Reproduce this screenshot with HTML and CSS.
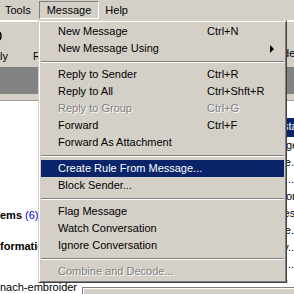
FILE: index.html
```html
<!DOCTYPE html>
<html>
<head>
<meta charset="utf-8">
<link rel="stylesheet" href="styles.css">
</head>
<body>
<div class="app">
  <div class="menubar">
    <span class="mb-item">Tools</span>
    <span class="mb-item pressed">Message</span>
    <span class="mb-item help">Help</span>
  </div>
  <div class="toolbar">
    <div class="tb-btn first">
      <svg class="tb-icon" width="20" height="12" viewBox="0 0 20 12"><path d="M14 1 C18 1 19 4 19 6 C19 8 18 11 14 11" fill="none" stroke="#000" stroke-width="1.5"/></svg>
      <span class="tb-label">Reply</span>
    </div>
    <div class="tb-btn second">
      <span class="tb-label">Reply All</span>
    </div>
    <div class="tb-btn last">
      <span class="tb-label">Sender</span>
    </div>
  </div>
  <div class="band"></div>
  <div class="subband"></div>
  <div class="main">
    <div class="left">
      <div class="line bold">ems <span class="count">(6)</span></div>
      <div class="line bold gap">formation</div>
    </div>
    <div class="right">
      <div class="row sel">Re: order status...</div>
      <div class="row">Price change.</div>
      <div class="row">Fabric type.</div>
      <div class="row">Shipping....</div>
      <div class="row">Thread colors.</div>
      <div class="row">Re: samples...</div>
      <div class="row">Invoice.</div>
      <div class="row">Delivery..</div>
      <div class="row">Design...</div>
      <div class="row">Question..</div>
    </div>
  </div>
  <div class="bottom">
    <div class="addr">nach-embroidery</div>
    <div class="panel"></div>
  </div>
</div>

<div class="menu">
  <div class="mi"><span class="lbl">New Message</span><span class="sc">Ctrl+N</span><span></span></div>
  <div class="mi"><span class="lbl">New Message Using</span><span class="sc"></span><span class="arrow"></span></div>
  <div class="sep"></div>
  <div class="mi"><span class="lbl">Reply to Sender</span><span class="sc">Ctrl+R</span><span></span></div>
  <div class="mi"><span class="lbl">Reply to All</span><span class="sc">Ctrl+Shft+R</span><span></span></div>
  <div class="mi disabled"><span class="lbl">Reply to Group</span><span class="sc">Ctrl+G</span><span></span></div>
  <div class="mi"><span class="lbl">Forward</span><span class="sc">Ctrl+F</span><span></span></div>
  <div class="mi"><span class="lbl">Forward As Attachment</span><span class="sc"></span><span></span></div>
  <div class="sep"></div>
  <div class="mi active"><span class="lbl">Create Rule From Message...</span><span class="sc"></span><span></span></div>
  <div class="mi"><span class="lbl">Block Sender...</span><span class="sc"></span><span></span></div>
  <div class="sep"></div>
  <div class="mi"><span class="lbl">Flag Message</span><span class="sc"></span><span></span></div>
  <div class="mi"><span class="lbl">Watch Conversation</span><span class="sc"></span><span></span></div>
  <div class="mi"><span class="lbl">Ignore Conversation</span><span class="sc"></span><span></span></div>
  <div class="sep"></div>
  <div class="mi disabled"><span class="lbl">Combine and Decode...</span><span class="sc"></span><span></span></div>
</div>
</body>
</html>
```

FILE: styles.css
```css
html, body {
  margin: 0;
  padding: 0;
}
body {
  width: 294px;
  height: 294px;
  overflow: hidden;
  position: relative;
  background: #fff;
  font-family: "Liberation Sans", Arial, sans-serif;
  font-size: 11px;
  color: #000;
}
.app {
  width: 294px;
  height: 294px;
  display: flex;
  flex-direction: column;
  overflow: hidden;
}
.menubar {
  height: 20px;
  flex: none;
  background: #d4d0c8;
  display: flex;
  align-items: center;
  margin-left: -3px;
}
.mb-item {
  height: 16px;
  line-height: 16px;
  padding: 0 7px;
  border: 1px solid transparent;
  white-space: nowrap;
}
.mb-item.pressed {
  border-color: #808080 #fff #fff #808080;
}
.mb-item.help {
  padding-left: 5px;
}
.toolbar {
  height: 47px;
  flex: none;
  background: #d4d0c8;
  box-shadow: inset 0 1px #fff, inset 0 -1px #808080;
  margin-top: 1px;
  display: flex;
  align-items: flex-end;
  padding-bottom: 6px;
  box-sizing: border-box;
}
.tb-btn {
  display: flex;
  flex-direction: column;
  white-space: nowrap;
}
.tb-btn.first {
  margin-left: -19px;
  width: 27px;
  align-items: flex-end;
}
.tb-btn.first .tb-icon {
  margin-bottom: 8px;
  margin-right: 6px;
}
.tb-btn.second {
  margin-left: 25px;
  align-items: flex-start;
}
.tb-btn.last {
  margin-left: auto;
  margin-right: -5px;
  margin-bottom: 3px;
}
.tb-label {
  line-height: 12px;
}
.band {
  height: 26px;
  flex: none;
  background: #828282;
}
.subband {
  height: 6px;
  flex: none;
  background: #d4d0c8;
  border-bottom: 1px solid #a0a0a0;
}
.main {
  flex: 1;
  display: grid;
  grid-template-columns: 1fr 60px;
  min-height: 0;
}
.left {
  padding-top: 107px;
  white-space: nowrap;
  overflow: hidden;
}
.line {
  height: 14px;
  line-height: 14px;
}
.bold {
  font-weight: bold;
}
.count {
  color: #0000cc;
  font-weight: normal;
}
.gap {
  margin-top: 17px;
}
.right {
  padding-top: 17px;
  overflow: hidden;
}
.row {
  height: 17px;
  line-height: 17px;
  white-space: nowrap;
  overflow: hidden;
  text-align: right;
}
.row.sel {
  background: #0a246a;
  color: #fff;
  height: 19px;
}
.bottom {
  height: 12px;
  flex: none;
  display: flex;
}
.addr {
  width: 77px;
  white-space: nowrap;
  overflow: hidden;
  line-height: 12px;
  margin-top: -1px;
}
.panel {
  flex: 1;
  margin-left: 5px;
  margin-top: 5px;
  background: #d4d0c8;
  border-top: 1px solid #808080;
  border-left: 1px solid #808080;
  box-shadow: inset 1px 1px #fff;
}

/* Popup menu (overlay) */
.menu {
  position: absolute;
  left: 38px;
  top: 20px;
  width: 249px;
  box-sizing: border-box;
  background: #d4d0c8;
  border: 1px solid;
  border-color: #d4d0c8 #404040 #404040 #d4d0c8;
  box-shadow: inset 1px 1px #fff, inset -1px -1px #808080;
  padding: 2px;
}
.mi {
  height: 17px;
  line-height: 17px;
  display: grid;
  grid-template-columns: 149px 1fr 14px;
  padding-left: 17px;
  white-space: nowrap;
  align-items: center;
}
.mi.active {
  background: #0a246a;
  color: #fff;
}
.mi.disabled {
  color: #808080;
  text-shadow: 1px 1px 0 #fff;
}
.arrow {
  width: 0;
  height: 0;
  border-left: 4px solid #000;
  border-top: 4px solid transparent;
  border-bottom: 4px solid transparent;
}
.sep {
  height: 0;
  margin: 4px 0 3px;
  border-top: 1px solid #808080;
  border-bottom: 1px solid #fff;
}
```
